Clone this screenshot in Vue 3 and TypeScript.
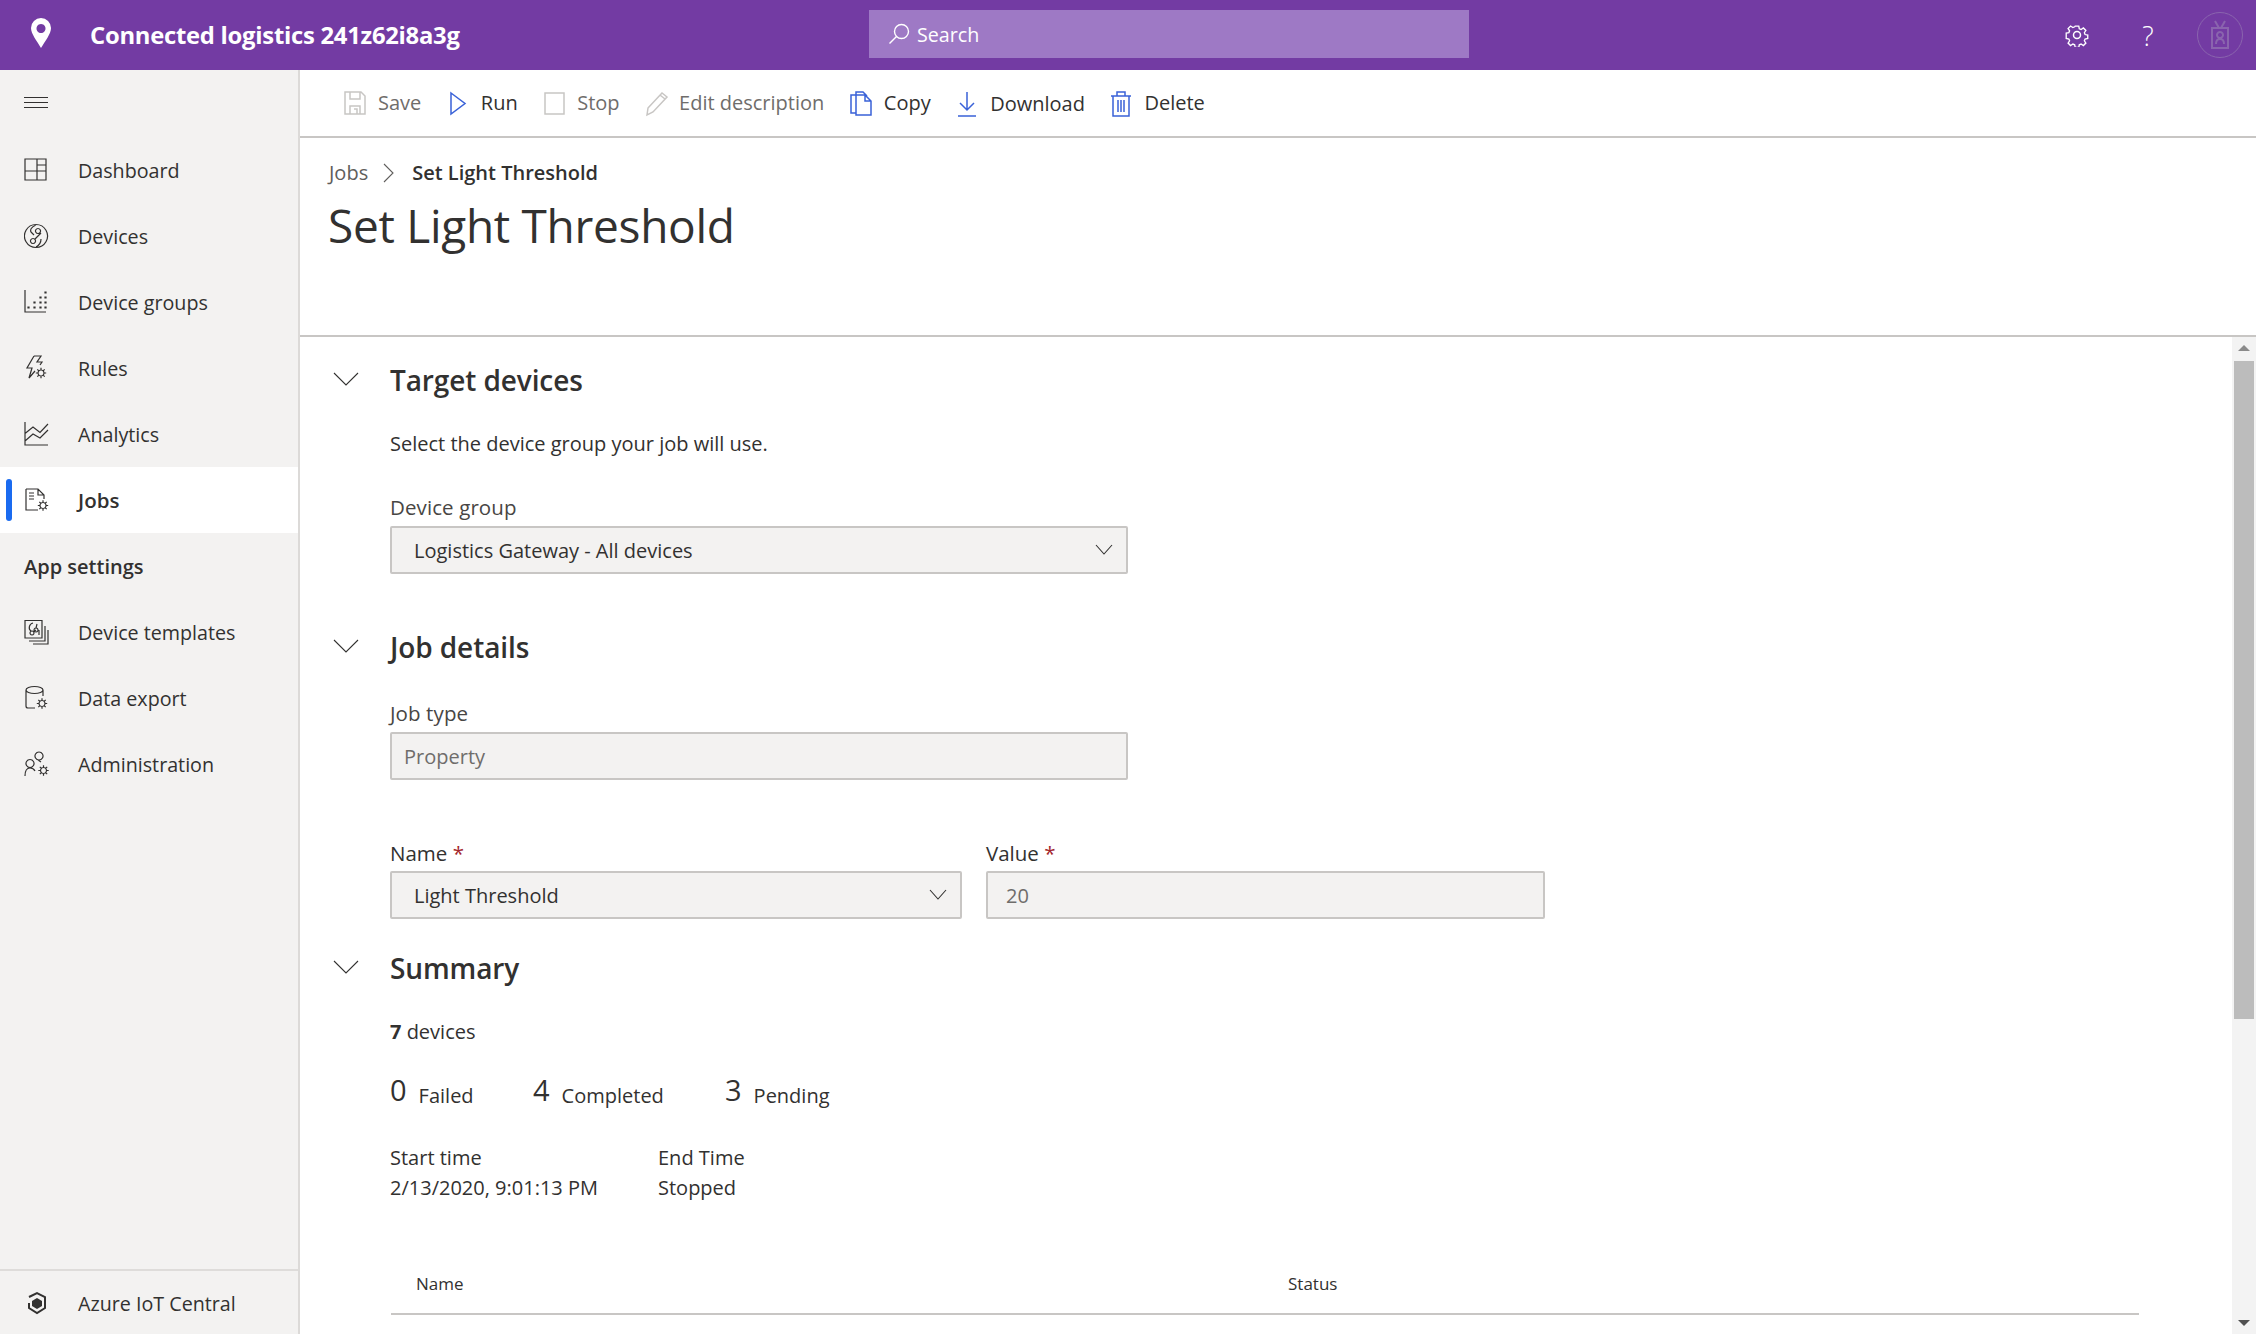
<script setup lang="ts">
interface NavItem {
  label: string;
  d: string;
  gear?: number[];
  active?: boolean;
}

// ring plus eight short teeth, the nav icons all share it
const gear = (x: number, y: number) => {
  let d = `M${x} ${y - 3}a3 3 0 1 0 .01 0`;
  for (let i = 0; i < 8; i++) {
    const a = (i * Math.PI) / 4;
    const c = Math.cos(a);
    const s = Math.sin(a);
    d += `M${(x + c * 3).toFixed(2)} ${(y + s * 3).toFixed(2)}L${(x + c * 5.2).toFixed(2)} ${(y + s * 5.2).toFixed(2)}`;
  }
  return d;
};

const navTop: NavItem[] = [
  { label: 'Dashboard', d: 'M1 2h21v21H1zM1 14h21M13 2v21M13 8h9' },
  { label: 'Devices', d: 'M12 1.500a11.500 11.500 0 1 0 .01 0M12 2c-5 2-6 5-5 7M12 24c4-2 5-4 5-8M14 5.500a2.500 2.500 0 1 0 .01 0M9 15.500a2.500 2.500 0 1 0 .01 0M11 16l6-6M7 9l3 3' },
  { label: 'Device groups', d: 'M1 1v22h21M4 18h1v1H4zM10 18h1v1h-1zM16 18h1v1h-1zM21 18h1v1h-1zM10 13h1v1h-1zM16 13h1v1h-1zM21 13h1v1h-1zM16 8h1v1h-1zM21 8h1v1h-1zM21 3h1v1h-1z' },
  { label: 'Rules', d: 'M10 1h7l-4 6h5l-2 3M10 1L3 13h5L5 23l6-7', gear: [17, 18] },
  { label: 'Analytics', d: 'M1 1v23h23M1 12.500L9 6l7 5.500L24 3M1 20l8-7 7 4 8-8' },
  { label: 'Jobs', d: 'M2 2h12l6 6v4M14 2v6h6M2 2v21h12M5 6h5M5 9h5M5 12h5', gear: [19, 18.500], active: true },
];

const navSettings: NavItem[] = [
  { label: 'Device templates', d: 'M1 1.500h17V19H1zM21 7v15H5M24 11v14H9M9 4c-4 1-5 6-2 8M8 12a2 2 0 1 0 .01 0M12 9a2 2 0 1 0 .01 0M13 5l-1 4M9 13l3-2M15 11v5' },
  { label: 'Data export', d: 'M2 5v16a2 2 0 0 0 2 2h7M19 5v6M2 5a8.500 3.500 0 0 1 17 0a8.500 3.500 0 0 1-17 0', gear: [18, 18.500] },
  { label: 'Administration', d: 'M15 1a4 4 0 1 0 .01 0M6 8.500a4 4 0 1 0 .01 0M1 25c0-5 2-8 5-8s4 1 5 3M14 9l3 2', gear: [19.500, 19.500] },
];

const toolbar = [
  { label: 'Save', state: 'off', d: 'M1 1h16l4 4v18H1zM6 1v7h10V1M6 23v-8h10v8M10 18h3v5' },
  { label: 'Run', state: 'blue-only', d: 'M4 2l14 10.500L4 23z' },
  { label: 'Stop', state: 'off', d: 'M2 2h19v21H2z' },
  { label: 'Edit description', state: 'off', d: 'M3 17L17 2l5 4L8 21l-6 3zM15 4l5 4' },
  { label: 'Copy', state: 'on', d: 'M6 4V1h7l4 4M6 4H1v18h5M6 4h9l6 6v14H6zM15 4v6h6' },
  { label: 'Download', state: 'on', d: 'M11 1v17M4 12l7 7 7-7M2 25h18' },
  { label: 'Delete', state: 'on', d: 'M3 5v20h16V5M1 5h20M7 5V1h8v4M8 9v12M11 9v12M14 9v12' },
];
</script>

<template>
  <div class="app">
    <header class="top">
      <svg class="pin" width="22" height="30" viewBox="0 0 22 30">
        <path fill-rule="evenodd" fill="#fff" d="M11 0a10 10 0 0 1 10 10c0 6-6 13-10 20C7 23 1 16 1 10A10 10 0 0 1 11 0zm0 6a4.500 4.500 0 1 0 .01 0z" />
      </svg>
      <div class="app-name">Connected logistics 241z62i8a3g</div>
      <div class="search">
        <svg width="22" height="22" viewBox="0 0 22 22" fill="none" stroke="#fff" stroke-width="1.400">
          <circle cx="13.500" cy="8.500" r="7" />
          <path d="M8.500 13.500L1.500 20.500" />
        </svg>
        <span>Search</span>
      </div>
      <div class="top-icons">
        <svg width="24" height="24" viewBox="0 0 24 24" fill="none" stroke="#fff" stroke-width="1.500">
          <circle cx="12" cy="12" r="3.500" />
          <path d="M10 2h4l.6 3 2 .8 2.600-1.700 2.800 2.800-1.700 2.600.8 2 3 .6v3.800l-3 .6-.8 2 1.700 2.600-2.800 2.800-2.600-1.700-2 .8-.6 3h-4l-.6-3-2-.8-2.600 1.700-2.800-2.800 1.700-2.600-.8-2-3-.6V9.900l3-.6.8-2-1.700-2.600 2.800-2.800 2.600 1.700 2-.8z" transform="translate(1.300 1.300) scale(.89)" />
        </svg>
        <span class="help">?</span>
        <div class="avatar">
          <svg width="20" height="30" viewBox="0 0 20 30" fill="none" stroke="#8a64ae" stroke-width="2">
            <path d="M2 8h16v20H2zM5 1l4 7M15 1l-4 7M6 24c0-4 2-5 4-5s4 1 4 5M10 12a3 3 0 1 0 .01 0" />
          </svg>
        </div>
      </div>
    </header>

    <div class="body">
      <aside class="side">
        <div class="burger"><i></i><i></i><i></i></div>
        <a v-for="n in navTop" :key="n.label" class="nav" :class="{ active: n.active }">
          <svg width="26" height="27" viewBox="0 0 26 27" fill="none" stroke="#323130" stroke-width="1.200">
            <path :d="n.d" />
            <path v-if="n.gear" :d="gear(n.gear[0], n.gear[1])" />
          </svg>
          <span>{{ n.label }}</span>
        </a>
        <div class="side-title">App settings</div>
        <a v-for="n in navSettings" :key="n.label" class="nav">
          <svg width="26" height="27" viewBox="0 0 26 27" fill="none" stroke="#323130" stroke-width="1.200">
            <path :d="n.d" />
            <path v-if="n.gear" :d="gear(n.gear[0], n.gear[1])" />
          </svg>
          <span>{{ n.label }}</span>
        </a>
        <div class="side-foot nav">
          <svg width="26" height="27" viewBox="0 0 26 27" fill="none" stroke="#323130" stroke-width="2">
            <path d="M5 7l8-4 8 4v11l-8 5-8-5v-5" />
            <path fill="#323130" stroke="none" d="M13 8l5 3v5l-5 3-5-3v-5z" />
          </svg>
          <span>Azure IoT Central</span>
        </div>
      </aside>

      <main class="main">
        <div class="toolbar">
          <div v-for="t in toolbar" :key="t.label" class="tool" :class="t.state">
            <svg width="24" height="27" viewBox="0 -1 24 27" fill="none" stroke-width="1.500">
              <path :d="t.d" />
            </svg>
            <span>{{ t.label }}</span>
          </div>
        </div>

        <div class="head">
          <div class="crumbs">
            <span class="crumb-link">Jobs</span>
            <svg width="14" height="22" viewBox="0 0 14 22" fill="none" stroke="#605e5c" stroke-width="1.100">
              <path d="M2 2l9 9-9 9" />
            </svg>
            <span class="crumb-now">Set Light Threshold</span>
          </div>
          <h1>Set Light Threshold</h1>
        </div>

        <div class="scroller">
          <div class="content">
            <section class="sec-head first">
              <svg width="26" height="16" viewBox="0 0 26 16" fill="none" stroke="#323130" stroke-width="1.100"><path d="M1 2l12 12L25 2" /></svg>
              <h2>Target devices</h2>
            </section>
            <div class="block">
              <p class="desc">Select the device group your job will use.</p>
              <label class="lbl soft gap-dg">Device group</label>
              <div class="field wide sel">
                <span>Logistics Gateway - All devices</span>
                <svg width="18" height="12" viewBox="0 0 18 12" fill="none" stroke="#323130" stroke-width="1.100"><path d="M1 1l8 9 8-9" /></svg>
              </div>
            </div>

            <section class="sec-head jobs">
              <svg width="26" height="16" viewBox="0 0 26 16" fill="none" stroke="#323130" stroke-width="1.100"><path d="M1 2l12 12L25 2" /></svg>
              <h2>Job details</h2>
            </section>
            <div class="block">
              <label class="lbl soft gap-jt">Job type</label>
              <div class="field wide ro"><span>Property</span></div>
              <div class="pair">
                <div class="col-name">
                  <label class="lbl">Name <b>*</b></label>
                  <div class="field sel">
                    <span>Light Threshold</span>
                    <svg width="18" height="12" viewBox="0 0 18 12" fill="none" stroke="#323130" stroke-width="1.100"><path d="M1 1l8 9 8-9" /></svg>
                  </div>
                </div>
                <div class="col-value">
                  <label class="lbl">Value <b>*</b></label>
                  <div class="field ro"><span>20</span></div>
                </div>
              </div>
            </div>

            <section class="sec-head summary">
              <svg width="26" height="16" viewBox="0 0 26 16" fill="none" stroke="#323130" stroke-width="1.100"><path d="M1 2l12 12L25 2" /></svg>
              <h2>Summary</h2>
            </section>
            <div class="block">
              <p class="count"><b>7</b> devices</p>
              <div class="stats">
                <div class="stat s1"><strong>0</strong><span>Failed</span></div>
                <div class="stat s2"><strong>4</strong><span>Completed</span></div>
                <div class="stat"><strong>3</strong><span>Pending</span></div>
              </div>
              <div class="times">
                <div class="t1"><div>Start time</div><div>2/13/2020, 9:01:13 PM</div></div>
                <div><div>End Time</div><div>Stopped</div></div>
              </div>
              <div class="table-head">
                <span class="th-name">Name</span>
                <span>Status</span>
              </div>
            </div>
          </div>

          <div class="scrollbar">
            <div class="arrow up"></div>
            <div class="thumb"></div>
            <div class="spacer"></div>
            <div class="arrow down"></div>
          </div>
        </div>
      </main>
    </div>
  </div>
</template>

<style>
html, body { margin: 0; overflow: hidden; }
</style>

<style scoped>
.app {
  width: 2256px;
  height: 1334px;
  display: flex;
  flex-direction: column;
  overflow: hidden;
  font-family: "Open Sans", "Noto Sans", sans-serif;
  font-size: 19.7px;
  color: #323130;
  background: #fff;
}

.top {
  height: 70px;
  flex: none;
  background: #733ba3;
  display: flex;
  align-items: center;
  color: #fff;
}
.pin { margin-left: 30px; margin-top: -4px; }
.app-name {
  margin-left: 38px;
  width: 400px;
  margin-right: 379px;
  font-size: 23.8px;
  font-weight: 700;
  letter-spacing: -0.25px;
  white-space: nowrap;
}
.search {
  width: 600px;
  height: 48px;
  background: #9e79c5;
  display: flex;
  align-items: center;
  gap: 7px;
  padding-left: 19px;
  box-sizing: border-box;
  margin-top: -2px;
}
.search span { margin-top: 1px; }
.top-icons {
  margin-left: auto;
  display: flex;
  align-items: center;
  padding-right: 13px;
}
.help { font-size: 27px; width: 24px; text-align: center; margin-left: 47px; font-weight: 300; }
.avatar {
  width: 46px;
  height: 46px;
  margin-left: 37px;
  border: 1.500px solid #8a64ae;
  border-radius: 50%;
  box-sizing: border-box;
  display: flex;
  align-items: center;
  justify-content: center;
}

.body { flex: 1; display: flex; min-height: 0; }

.side {
  width: 300px;
  flex: none;
  background: #f3f2f1;
  border-right: 2px solid #dcdad8;
  box-sizing: border-box;
  display: flex;
  flex-direction: column;
}
.burger {
  height: 67px;
  flex: none;
  box-sizing: border-box;
  padding: 0 0 2px 24px;
  display: flex;
  flex-direction: column;
  justify-content: center;
  gap: 4px;
}
.burger i { display: block; width: 24px; height: 1px; background: #323130; }
.nav {
  height: 66px;
  flex: none;
  display: flex;
  align-items: center;
  gap: 28px;
  padding-left: 24px;
  position: relative;
  box-sizing: border-box;
}
.nav svg { flex: none; }
.nav.active { background: #fff; font-weight: 600; font-size: 20.5px; }
.nav.active::before {
  content: "";
  position: absolute;
  left: 6px;
  top: 12px;
  width: 6px;
  height: 42px;
  background: #1a6bf0;
  border-radius: 3px;
}
.side-title {
  height: 66px;
  flex: none;
  display: flex;
  align-items: center;
  padding-left: 24px;
  font-weight: 600;
  font-size: 20px;
}
.side-foot {
  margin-top: auto;
  height: 65px;
  padding-top: 2px;
  border-top: 2px solid #dedcda;
}

.main { flex: 1; min-width: 0; display: flex; flex-direction: column; font-size: 20px; }
.toolbar {
  height: 68px;
  flex: none;
  box-sizing: border-box;
  border-bottom: 2px solid #c8c6c4;
  display: flex;
  align-items: center;
  gap: 24.5px;
  padding-left: 44px;
}
.tool { display: flex; align-items: center; gap: 10px; white-space: nowrap; }
.tool svg { flex: none; }
.tool span { margin-top: -2px; }
.tool:nth-child(6) span { margin-top: 1px; }
.tool.off { color: #6f6d6b; }
.tool.off svg { stroke: #c8c6c4; }
.tool.on svg, .tool.blue-only svg { stroke: #3a62d8; }
.tool { margin-right: 1px; }

.head {
  height: 199px;
  flex: none;
  border-bottom: 2px solid #c8c6c4;
  padding-left: 28px;
  box-sizing: border-box;
}
.crumbs {
  display: flex;
  align-items: center;
  padding-top: 21px;
  height: 27px;
}
.crumb-link { margin-left: 1px; color: #605e5c; }
.crumbs svg { margin: 0 14px; }
.crumb-now { font-weight: 600; margin-left: 2px; }
h1 {
  margin: 8px 0 0;
  font-size: 46px;
  font-weight: 400;
  line-height: 62px;
  letter-spacing: -0.3px;
  white-space: nowrap;
}

.scroller { flex: 1; min-height: 0; display: flex; overflow: hidden; }
.content { flex: 1; min-width: 0; }

.sec-head {
  display: flex;
  align-items: center;
  height: 40px;
  padding-left: 33px;
  gap: 31px;
}
.sec-head svg { margin-top: -2px; }
.sec-head.first { margin-top: 23px; }
.sec-head.jobs { margin-top: 53px; }
.sec-head.summary { margin-top: 29px; }
h2 { margin: 0; font-size: 28px; font-weight: 600; letter-spacing: -0.1px; }

.block { padding-left: 90px; }
.desc { margin: 31px 0 0; line-height: 26px; }
.lbl { display: block; line-height: 26px; font-weight: 500; font-size: 20.5px; }
.lbl.soft { color: #484644; letter-spacing: 0.1px; }
.lbl b { color: #a4262c; font-weight: 400; }
.gap-dg { margin-top: 37px; }
.gap-jt { margin-top: 33px; }

.field {
  height: 48px;
  box-sizing: border-box;
  background: #f3f2f1;
  border: 2px solid #c8c6c4;
  border-radius: 2px;
  display: flex;
  align-items: center;
  padding-left: 22px;
  margin-top: 6px;
}
.field.wide { width: 738px; }
.field.ro { padding-left: 12px; color: #6f6d6b; }
.col-value .field.ro { padding-left: 18px; }
.field.sel { justify-content: space-between; padding-right: 13px; }

.pair { display: flex; gap: 24px; margin-top: 60px; }
.col-name { width: 572px; }
.col-value { width: 559px; }
.pair .field { margin-top: 5px; }

.count { margin: 31px 0 0; line-height: 26px; }
.count b { font-weight: 700; }
.stats { display: flex; margin-top: 27px; align-items: baseline; height: 40px; }
.stat { display: flex; align-items: baseline; gap: 12px; }
.stat strong { font-size: 29px; font-weight: 500; position: relative; top: -2px; }
.stat.s1 { width: 143px; }
.stat.s2 { width: 192px; }
.times { display: flex; margin-top: 31px; line-height: 30px; }
.times .t1 { width: 268px; }
.table-head {
  margin: 61px 93px 0 1px;
  height: 49px;
  border-bottom: 2px solid #c8c6c4;
  display: flex;
  font-size: 17px;
  font-weight: 500;
  padding-left: 25px;
  line-height: 40px;
}
.th-name { width: 872px; }

.scrollbar {
  width: 24px;
  flex: none;
  background: #f3f3f3;
  display: flex;
  flex-direction: column;
  align-items: center;
}
.arrow { height: 24px; flex: none; width: 100%; position: relative; }
.arrow::after {
  content: "";
  position: absolute;
  left: 6px;
  width: 0;
  height: 0;
  border-left: 6px solid transparent;
  border-right: 6px solid transparent;
}
.arrow.up::after { top: 8px; border-bottom: 6px solid #8a8a8a; }
.arrow.down::after { top: 10px; border-top: 6px solid #505050; }
.thumb { width: 20px; height: 658px; background: #bcbcbc; flex: none; }
.spacer { flex: 1; }
</style>
